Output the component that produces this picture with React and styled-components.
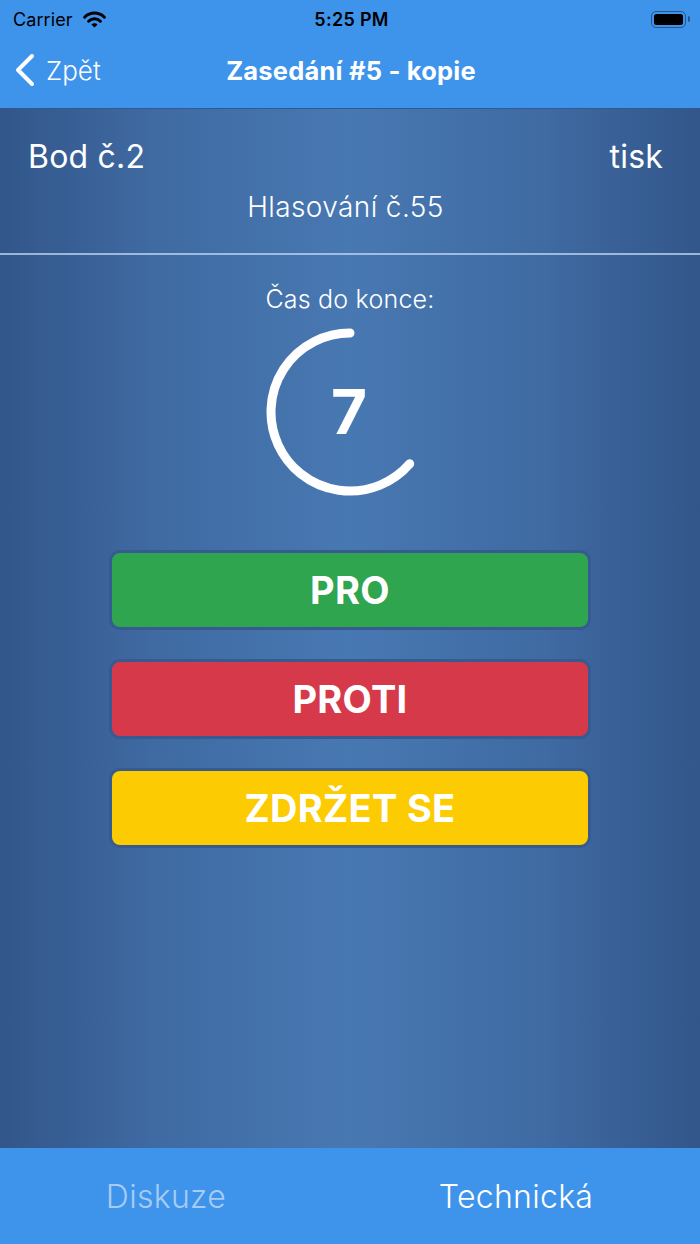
import styled, { createGlobalStyle } from "styled-components";

const GlobalStyle = createGlobalStyle`
  * { box-sizing: border-box; }
  html, body { margin: 0; padding: 0; }
  body {
    font-family: Inter, "Noto Sans", "Liberation Sans", sans-serif;
    -webkit-font-smoothing: antialiased;
  }
`;

const Screen = styled.div`
  width: 700px;
  height: 1244px;
  display: flex;
  flex-direction: column;
  overflow: hidden;
`;

const TopBar = styled.div`
  background: #3e93ea;
  flex-shrink: 0;
`;

const StatusBar = styled.div`
  height: 38px;
  padding: 0 10px 0 13px;
  display: grid;
  grid-template-columns: 1fr auto 1fr;
  align-items: center;
  color: #000;
`;

const StatusLeft = styled.div`
  display: flex;
  align-items: center;
  gap: 9px;
  font-size: 18px;
  letter-spacing: 0.1px;
`;

const Clock = styled.div`
  font-size: 18px;
  font-weight: 600;
  letter-spacing: 0.3px;
`;

const StatusRight = styled.div`
  display: flex;
  justify-content: flex-end;
  align-items: center;
  gap: 2px;
`;

const Battery = styled.div`
  width: 35px;
  height: 17px;
  border: 1.5px solid rgba(0, 0, 0, 0.4);
  border-radius: 5px;
  padding: 2px;
`;

const BatteryFill = styled.div`
  width: 100%;
  height: 100%;
  background: #000;
  border-radius: 2.5px;
`;

const BatteryCap = styled.div`
  width: 2px;
  height: 6px;
  background: rgba(0, 0, 0, 0.4);
  border-radius: 0 2px 2px 0;
`;

const NavBar = styled.div`
  height: 70px;
  display: grid;
  grid-template-columns: 1fr auto 1fr;
  align-items: center;
  padding: 0 12px 6px 14px;
  color: #fff;
`;

const BackButton = styled.div`
  display: flex;
  align-items: center;
  gap: 10px;
  font-size: 26px;
  font-weight: 300;
`;

const NavTitle = styled.div`
  font-size: 25.5px;
  font-weight: 700;
  letter-spacing: 0.2px;
`;

const Main = styled.main`
  flex: 1;
  display: flex;
  flex-direction: column;
  align-items: center;
  color: #fff;
  background: linear-gradient(
    90deg,
    #32568a 0%,
    #3f6aa2 22%,
    #4878b2 50%,
    #3f6aa2 78%,
    #32568a 100%
  );
  border-top: 1px solid #2f5a8f;
`;

const Info = styled.section`
  width: 100%;
  padding: 29px 37px 0 28px;
  height: 144px;
`;

const InfoRow = styled.div`
  display: flex;
  justify-content: space-between;
  font-size: 32px;
  line-height: 38px;
  letter-spacing: 0.2px;
`;

const VoteNumber = styled.div`
  text-align: center;
  font-size: 28px;
  font-weight: 300;
  line-height: 32px;
  letter-spacing: 0.4px;
  margin-top: 15px;
`;

const Divider = styled.hr`
  width: 100%;
  margin: 0;
  border: 0;
  height: 1.5px;
  background: rgba(190, 215, 240, 0.75);
`;

const TimerLabel = styled.div`
  margin-top: 29px;
  font-size: 25px;
  font-weight: 300;
  line-height: 30px;
  letter-spacing: 0.2px;
`;

const Ring = styled.div`
  position: relative;
  width: 170px;
  height: 170px;
  margin-top: 13px;
`;

const RingValue = styled.div`
  position: absolute;
  inset: 0;
  display: flex;
  align-items: center;
  justify-content: center;
  font-size: 62px;
  font-weight: 700;
  padding-right: 2px;
`;

const Buttons = styled.div`
  margin-top: 53px;
  width: 482px;
  display: flex;
  flex-direction: column;
  gap: 29px;
`;

const VoteButton = styled.button`
  height: 80px;
  border: 3px solid #375b90;
  border-radius: 11px;
  background: ${(props) => props.color};
  color: #fff;
  font-family: inherit;
  font-size: 38px;
  font-weight: 700;
  letter-spacing: 0.3px;
  cursor: pointer;
`;

const TabBar = styled.nav`
  height: 96px;
  flex-shrink: 0;
  background: #3e93ea;
  display: grid;
  grid-template-columns: 1fr 1fr;
  align-items: center;
`;

const Tab = styled.div`
  text-align: center;
  font-size: 32px;
  font-weight: 300;
  letter-spacing: 0.3px;
  padding-right: 18px;
  color: ${(props) => (props.active ? "#fff" : "rgba(255,255,255,0.55)")};
`;

const WifiIcon = () => (
  <svg width="25" height="18" viewBox="0 0 25 18">
    <path d="M12.5 17.6 L9.4 14.5 A4.4 4.4 0 0 1 15.6 14.5 Z" fill="#000" />
    <path
      d="M6.6 11.2 A8.4 8.4 0 0 1 18.4 11.2"
      fill="none"
      stroke="#000"
      strokeWidth="3"
      strokeLinecap="round"
    />
    <path
      d="M2.6 7.2 A14 14 0 0 1 22.4 7.2"
      fill="none"
      stroke="#000"
      strokeWidth="3"
      strokeLinecap="round"
    />
  </svg>
);

const Chevron = () => (
  <svg width="22" height="34" viewBox="0 0 22 34">
    <polyline
      points="18,3 4,17 18,31"
      fill="none"
      stroke="#fff"
      strokeWidth="4"
      strokeLinecap="round"
      strokeLinejoin="round"
    />
  </svg>
);

// arc from the top, counter-clockwise, leaving a gap at the upper right
const CountdownArc = ({ value, total }) => {
  const r = 79;
  const c = 85;
  const frac = value / total;
  const end = -90 - frac * 360;
  const rad = (end * Math.PI) / 180;
  const x = c + r * Math.cos(rad);
  const y = c + r * Math.sin(rad);
  const large = frac > 0.5 ? 1 : 0;
  return (
    <svg width="170" height="170" viewBox="0 0 170 170">
      <path
        d={`M ${c} ${c - r} A ${r} ${r} 0 ${large} 0 ${x} ${y}`}
        fill="none"
        stroke="#fff"
        strokeWidth="9"
        strokeLinecap="round"
      />
    </svg>
  );
};

const App = () => {
  return (
    <Screen>
      <GlobalStyle />
      <TopBar>
        <StatusBar>
          <StatusLeft>
            Carrier
            <WifiIcon />
          </StatusLeft>
          <Clock>5:25 PM</Clock>
          <StatusRight>
            <Battery>
              <BatteryFill />
            </Battery>
            <BatteryCap />
          </StatusRight>
        </StatusBar>
        <NavBar>
          <BackButton>
            <Chevron />
            Zpět
          </BackButton>
          <NavTitle>Zasedání #5 - kopie</NavTitle>
          <div />
        </NavBar>
      </TopBar>
      <Main>
        <Info>
          <InfoRow>
            <span>Bod č.2</span>
            <span>tisk</span>
          </InfoRow>
          <VoteNumber>Hlasování č.55</VoteNumber>
        </Info>
        <Divider />
        <TimerLabel>Čas do konce:</TimerLabel>
        <Ring>
          <CountdownArc value={7} total={11} />
          <RingValue>7</RingValue>
        </Ring>
        <Buttons>
          <VoteButton color="#2fa550">PRO</VoteButton>
          <VoteButton color="#d63a4a">PROTI</VoteButton>
          <VoteButton color="#fccb02">ZDRŽET SE</VoteButton>
        </Buttons>
      </Main>
      <TabBar>
        <Tab>Diskuze</Tab>
        <Tab active>Technická</Tab>
      </TabBar>
    </Screen>
  );
};

export default App;
